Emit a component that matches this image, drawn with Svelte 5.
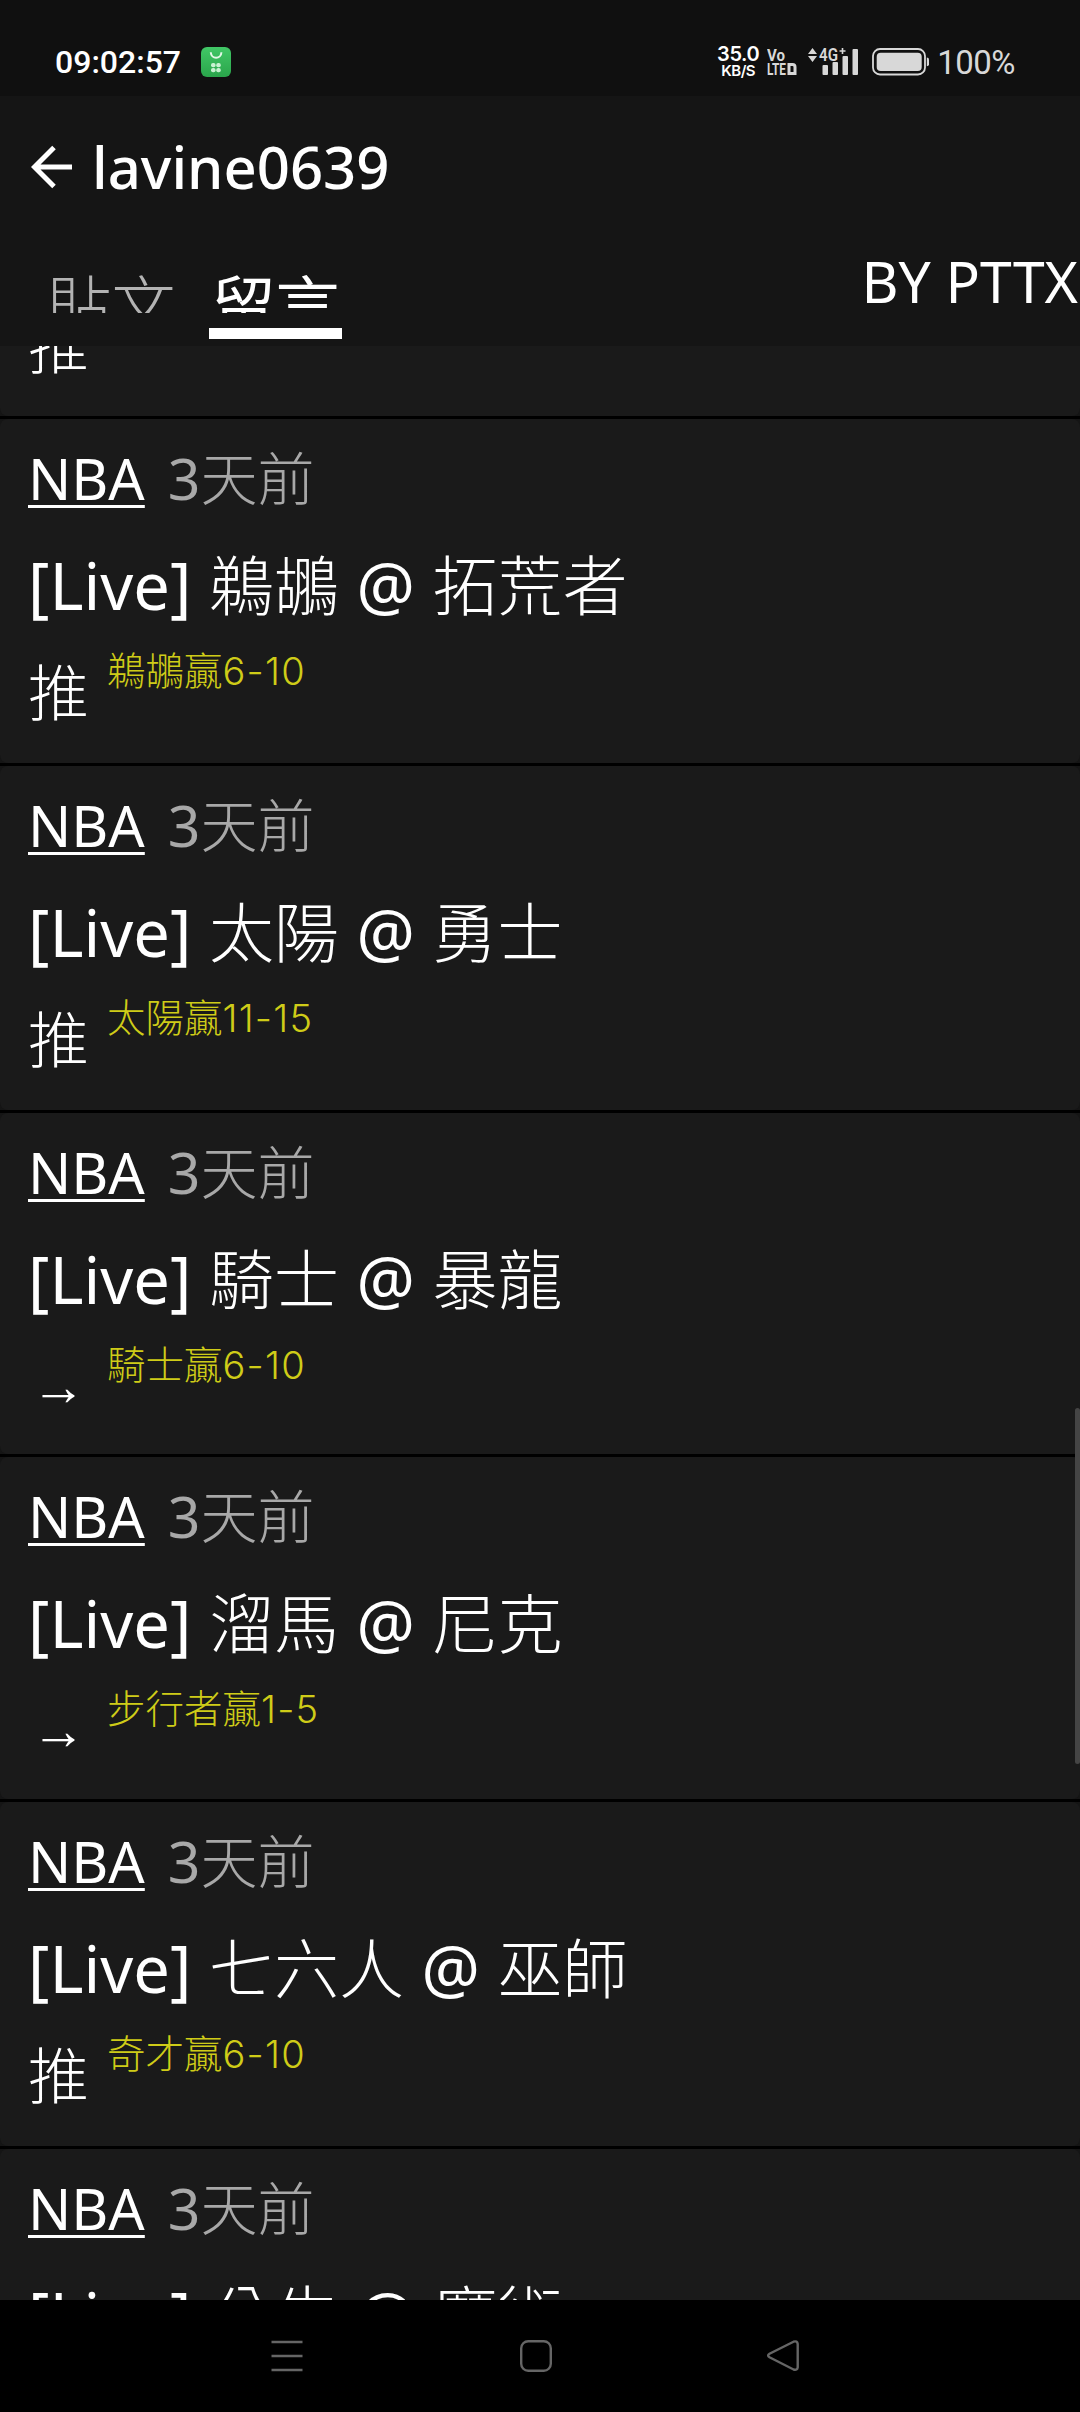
<script>
  let activeTab = 'comments'

  const tabs = [
    { id: 'posts', label: '貼文' },
    { id: 'comments', label: '留言' },
  ]

  const comments = [
    { board: 'NBA', time: ['3', '天前'], away: '鵜鶘', home: '拓荒者', mark: '推', text: '鵜鶘贏', score: '6-10' },
    { board: 'NBA', time: ['3', '天前'], away: '太陽', home: '勇士', mark: '推', text: '太陽贏', score: '11-15' },
    { board: 'NBA', time: ['3', '天前'], away: '騎士', home: '暴龍', mark: '→', text: '騎士贏', score: '6-10' },
    { board: 'NBA', time: ['3', '天前'], away: '溜馬', home: '尼克', mark: '→', text: '步行者贏', score: '1-5' },
    { board: 'NBA', time: ['3', '天前'], away: '七六人', home: '巫師', mark: '推', text: '奇才贏', score: '6-10' },
    { board: 'NBA', time: ['3', '天前'], away: '公牛', home: '魔術' },
  ]
</script>

<div class="screen">
  <div class="status">
    <span class="clock">09:02:57</span>
    <svg class="app-icon" viewBox="0 0 30 30">
      <defs>
        <linearGradient id="green" x1="0" y1="0" x2="0" y2="1">
          <stop offset="0" stop-color="#41c766" />
          <stop offset="1" stop-color="#2aa54b" />
        </linearGradient>
      </defs>
      <rect width="30" height="30" rx="6" fill="url(#green)" />
      <path d="M9.800 5.200C10 12.600 20.200 12.600 20.400 5.200" fill="none" stroke="#e4f8e8" stroke-width="2" />
      <g fill="#c9f2d2">
        <rect x="10" y="16" width="4.600" height="4.300" rx="2" />
        <rect x="15.200" y="16" width="4.600" height="4.300" rx="2" />
        <rect x="10" y="21" width="4.600" height="4.300" rx="2" />
        <rect x="15.200" y="21" width="4.600" height="4.300" rx="2" />
      </g>
    </svg>
    <div class="status-right">
      <div class="speed">
        <span class="rate">35.0</span>
        <span class="unit">KB/S</span>
      </div>
      <svg class="volte" viewBox="0 0 31 28">
        <text x="0" y="13" textLength="18" lengthAdjust="spacingAndGlyphs">Vo</text>
        <text x="0" y="27" textLength="19" lengthAdjust="spacingAndGlyphs">LTE</text>
        <path d="M22 16.500h3.500q2.500 0 2.500 2.500v6.500h-6z" fill="none" stroke="#d8d8d8" stroke-width="3" />
      </svg>
      <svg class="signal" viewBox="0 0 52 30">
        <path d="M0 7l4.500-6 4.500 6zM0 9l4.500 6 4.500-6z" />
        <text x="11" y="14" textLength="19" lengthAdjust="spacingAndGlyphs">4G</text>
        <path d="M34.500 1v6M31.500 4h6" stroke="#d8d8d8" stroke-width="1.600" />
        <rect x="14.500" y="18" width="5.500" height="10" rx="1" />
        <rect x="24.500" y="15" width="5.500" height="13" rx="1" />
        <rect x="34.500" y="9" width="5.500" height="19" rx="1" />
        <rect x="44.500" y="2" width="5.500" height="26" rx="1" />
      </svg>
      <svg class="battery" viewBox="0 0 58 28">
        <rect x="1" y="1" width="52" height="25.500" rx="7" fill="none" stroke="#d8d8d8" stroke-width="1.800" />
        <rect x="4.700" y="4.700" width="45" height="18.200" rx="4" />
        <path d="M54.800 9.500q2.200 0 2.200 2v4.800q0 2-2.200 2z" />
      </svg>
      <span class="percent">100%</span>
    </div>
  </div>

  <header>
    <div class="title-row">
      <svg class="back" viewBox="0 0 42 44">
        <path d="M23 2.500L3.500 22 23 41.500M3.500 22H41" fill="none" stroke="#fff" stroke-width="5" />
      </svg>
      <h1>lavine0639</h1>
    </div>
    <div class="tab-row">
      <nav class="tabs">
        {#each tabs as tab}
          <button class="tab" class:active={activeTab === tab.id} on:click={() => (activeTab = tab.id)}>
            <span>{tab.label}</span>
          </button>
        {/each}
      </nav>
      <span class="credit">BY PTTX</span>
    </div>
  </header>

  <main>
    <ul>
      <li class="scrolled">
        <div class="card"><span class="mark">推</span></div>
      </li>
      {#each comments as c}
        <li>
          <div class="card" class:short={c.mark === '→'}>
            <div class="meta">
              <a href="#{c.board}">{c.board}</a>
              <span class="time">{c.time[0]}<span class="han">{c.time[1]}</span></span>
            </div>
            <div class="subject">[Live] <span class="han">{c.away}</span> @ <span class="han">{c.home}</span></div>
            {#if c.mark}
              <div class="reply">
                <span class="mark" class:arrow={c.mark === '→'}>{c.mark}</span>
                <span class="text">{c.text}<span class="score">{c.score}</span></span>
              </div>
            {/if}
          </div>
        </li>
      {/each}
    </ul>
    <div class="scrollbar"></div>
  </main>

  <div class="navbar">
    <svg viewBox="0 0 34 34"><path d="M1.500 3h31M1.500 17h31M1.500 31h31" /></svg>
    <svg viewBox="0 0 34 34"><rect x="2.200" y="2.200" width="29.600" height="29.600" rx="7" /></svg>
    <svg viewBox="0 0 34 34"><path d="M27.500 2.700L3.500 14.800q-2.800 1.700 0 3.400L27.500 30.500q3.800 1.200 4.200-2.200V5q-.4-3.500-4.200-2.300z" /></svg>
  </div>
</div>

<style>
  :global(body) {
    margin: 0;
    background: #000;
  }

  .screen {
    width: 1080px;
    height: 2412px;
    display: flex;
    flex-direction: column;
    overflow: hidden;
    background: #151515;
    color: #fff;
    font-family: "Noto Sans", "Noto Sans CJK TC", sans-serif;
  }

  /* status bar */
  .status {
    height: 96px;
    flex: none;
    box-sizing: border-box;
    padding: 28px 65px 0 55px;
    display: flex;
    align-items: center;
    background: #101010;
    font-family: Roboto, sans-serif;
  }
  .clock {
    width: 146px;
    font-size: 32px;
    line-height: 36px;
    font-weight: 500;
  }
  .app-icon {
    width: 30px;
    height: 30px;
  }
  .status-right {
    margin-left: auto;
    display: flex;
    align-items: center;
    color: #d8d8d8;
    fill: #d8d8d8;
  }
  .speed {
    width: 44px;
    margin-right: 8px;
    display: flex;
    flex-direction: column;
    align-items: center;
    color: #fff;
    font-family: Inter, sans-serif;
    font-weight: 600;
  }
  .rate {
    font-size: 20px;
    line-height: 17px;
    letter-spacing: -0.4px;
  }
  .unit {
    font-size: 15px;
    line-height: 15px;
    letter-spacing: -0.5px;
  }
  .volte {
    width: 31px;
    height: 28px;
    margin-right: 10px;
    margin-left: -1px;
    font-size: 17px;
    font-weight: 700;
  }
  .signal {
    width: 52px;
    height: 30px;
    margin-right: 12px;
    font-size: 18px;
    font-weight: 600;
  }
  .battery {
    width: 58px;
    height: 28px;
    margin-right: 7px;
  }
  .percent {
    font-size: 33px;
    line-height: 34px;
    padding-top: 2px;
    letter-spacing: -0.5px;
    font-weight: 450;
  }

  /* header */
  header {
    height: 250px;
    flex: none;
    display: flex;
    flex-direction: column;
    background: #151515;
  }
  .title-row {
    height: 142px;
    padding-left: 31px;
    display: flex;
    align-items: center;
  }
  .back {
    width: 42px;
    height: 44px;
  }
  h1 {
    margin: 0 0 0 19px;
    font-size: 58px;
    line-height: 78px;
    font-weight: 500;
  }
  .tab-row {
    flex: 1;
    display: flex;
    justify-content: space-between;
    align-items: flex-start;
  }
  .tabs {
    display: flex;
    padding: 33px 0 0 45px;
    gap: 31px;
  }
  .tab {
    width: 133px;
    height: 68px;
    padding: 0;
    border: 0;
    border-bottom: 11px solid transparent;
    background: none;
    color: #b3b3b3;
    font: inherit;
    font-size: 64px;
    font-weight: 300;
  }
  .tab span {
    display: block;
    height: 42px;
    margin-bottom: 15px;
    overflow: hidden;
    line-height: 68px;
  }
  .tab.active {
    color: #fff;
    border-color: #fff;
    font-weight: 400;
  }
  .credit {
    padding: 4px 2px 0 0;
    font-size: 57px;
    line-height: 78px;
  }

  /* comment list */
  main {
    flex: 1;
    min-height: 0;
    position: relative;
    overflow: hidden;
  }
  ul {
    list-style: none;
    margin: -42px 0 0;
    padding: 0;
  }
  li {
    border-bottom: 3px solid #000;
    background: #151515;
  }
  .card {
    height: 344px;
    box-sizing: border-box;
    padding: 20px 28px 0;
    border-radius: 8px;
    background: #1a1a1a;
  }
  .card.short {
    height: 341.4px;
  }
  .scrolled .card {
    height: 112px;
    padding-top: 0;
  }
  .meta {
    display: flex;
    gap: 23px;
    font-size: 57px;
    line-height: 78px;
  }
  .meta a {
    color: #fff;
    text-decoration: underline;
    text-decoration-thickness: 3px;
    text-underline-offset: 5px;
  }
  .time {
    color: #a8a8a8;
  }
  .han {
    font-weight: 300;
  }
  .subject {
    margin-top: 24px;
    font-size: 65px;
    line-height: 88px;
    white-space: nowrap;
    word-spacing: 0.7px;
  }
  .reply {
    display: flex;
    align-items: flex-start;
    margin-top: 12px;
    gap: 18px;
  }
  .mark {
    width: 61px;
    padding-top: 10px;
    font-family: "Noto Sans CJK TC", sans-serif;
    font-size: 61px;
    line-height: 78px;
    font-weight: 300;
  }
  .scrolled .mark {
    display: block;
    padding-top: 0;
  }
  .arrow {
    padding-top: 12px;
    font-family: "Liberation Sans", sans-serif;
    font-size: 54px;
    text-align: center;
  }
  .text {
    color: #cfcc18;
    font-family: "Noto Sans CJK TC", sans-serif;
    font-size: 38.5px;
    line-height: 54px;
    font-weight: 300;
  }
  .score {
    font-family: Inter, sans-serif;
    font-size: 38px;
    font-weight: 350;
    letter-spacing: 1.2px;
  }

  .scrollbar {
    position: absolute;
    right: 0;
    top: 1062px;
    width: 5px;
    height: 356px;
    border-radius: 3px;
    background: #454545;
  }

  /* system navigation */
  .navbar {
    height: 112px;
    flex: none;
    box-sizing: border-box;
    padding: 0 280px 0 270px;
    display: flex;
    justify-content: space-between;
    align-items: center;
    background: #000;
  }
  .navbar svg {
    width: 34px;
    height: 34px;
    fill: none;
    stroke: #656565;
    stroke-width: 2.4;
  }
  .navbar svg:nth-child(2) {
    margin-left: 2px;
  }
</style>
